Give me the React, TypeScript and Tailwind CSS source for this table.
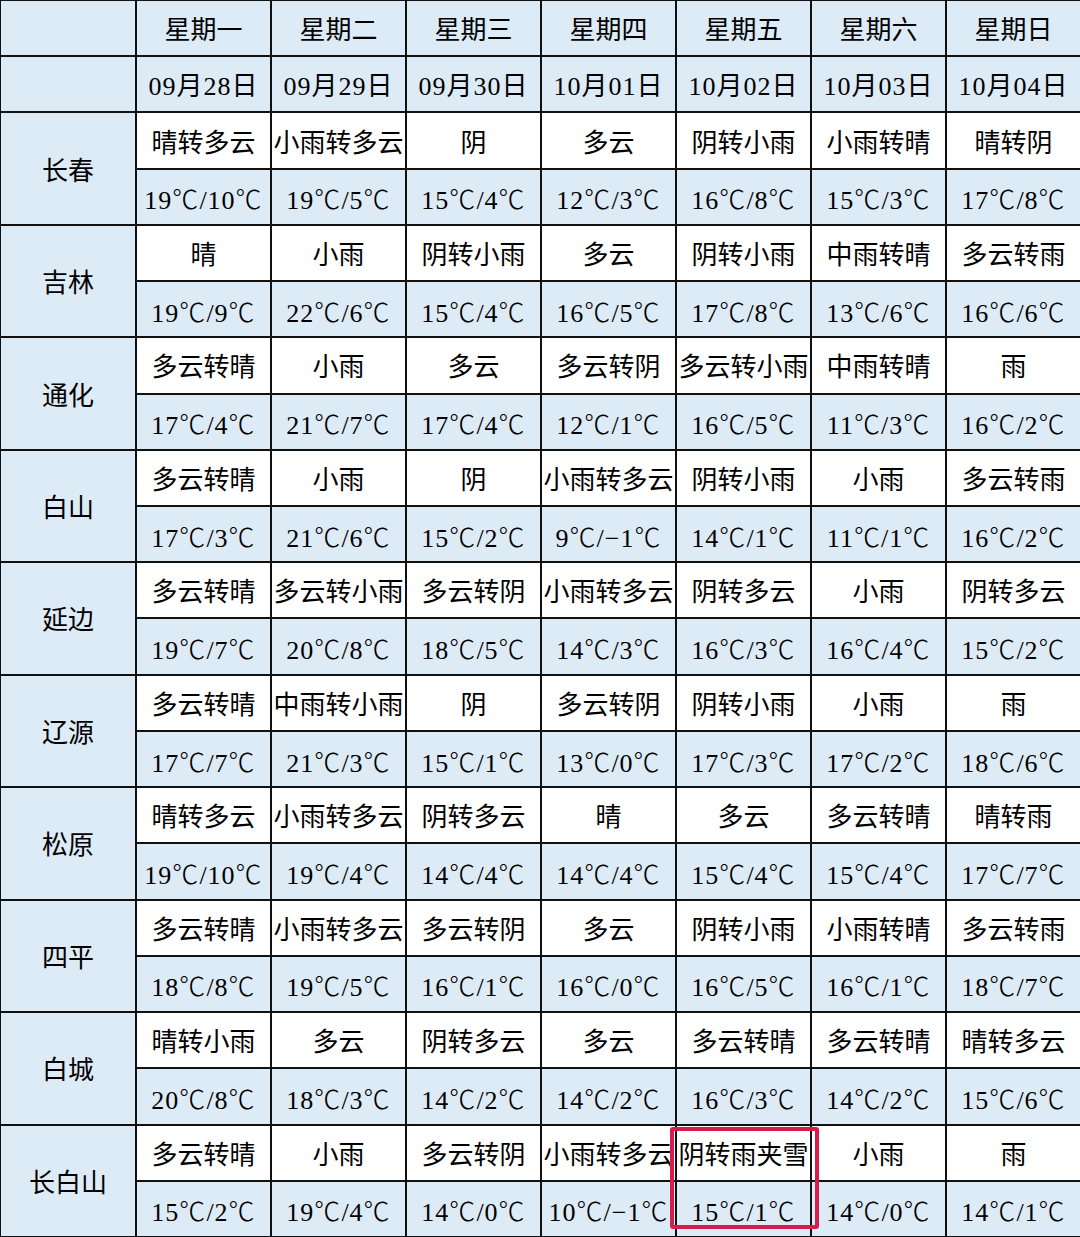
import React from 'react';

const days = ['星期一', '星期二', '星期三', '星期四', '星期五', '星期六', '星期日'];
const dates = ['09月28日', '09月29日', '09月30日', '10月01日', '10月02日', '10月03日', '10月04日'];

const cities = [
  {
    name: '长春',
    weather: ['晴转多云', '小雨转多云', '阴', '多云', '阴转小雨', '小雨转晴', '晴转阴'],
    temp: ['19℃/10℃', '19℃/5℃', '15℃/4℃', '12℃/3℃', '16℃/8℃', '15℃/3℃', '17℃/8℃'],
  },
  {
    name: '吉林',
    weather: ['晴', '小雨', '阴转小雨', '多云', '阴转小雨', '中雨转晴', '多云转雨'],
    temp: ['19℃/9℃', '22℃/6℃', '15℃/4℃', '16℃/5℃', '17℃/8℃', '13℃/6℃', '16℃/6℃'],
  },
  {
    name: '通化',
    weather: ['多云转晴', '小雨', '多云', '多云转阴', '多云转小雨', '中雨转晴', '雨'],
    temp: ['17℃/4℃', '21℃/7℃', '17℃/4℃', '12℃/1℃', '16℃/5℃', '11℃/3℃', '16℃/2℃'],
  },
  {
    name: '白山',
    weather: ['多云转晴', '小雨', '阴', '小雨转多云', '阴转小雨', '小雨', '多云转雨'],
    temp: ['17℃/3℃', '21℃/6℃', '15℃/2℃', '9℃/-1℃', '14℃/1℃', '11℃/1℃', '16℃/2℃'],
  },
  {
    name: '延边',
    weather: ['多云转晴', '多云转小雨', '多云转阴', '小雨转多云', '阴转多云', '小雨', '阴转多云'],
    temp: ['19℃/7℃', '20℃/8℃', '18℃/5℃', '14℃/3℃', '16℃/3℃', '16℃/4℃', '15℃/2℃'],
  },
  {
    name: '辽源',
    weather: ['多云转晴', '中雨转小雨', '阴', '多云转阴', '阴转小雨', '小雨', '雨'],
    temp: ['17℃/7℃', '21℃/3℃', '15℃/1℃', '13℃/0℃', '17℃/3℃', '17℃/2℃', '18℃/6℃'],
  },
  {
    name: '松原',
    weather: ['晴转多云', '小雨转多云', '阴转多云', '晴', '多云', '多云转晴', '晴转雨'],
    temp: ['19℃/10℃', '19℃/4℃', '14℃/4℃', '14℃/4℃', '15℃/4℃', '15℃/4℃', '17℃/7℃'],
  },
  {
    name: '四平',
    weather: ['多云转晴', '小雨转多云', '多云转阴', '多云', '阴转小雨', '小雨转晴', '多云转雨'],
    temp: ['18℃/8℃', '19℃/5℃', '16℃/1℃', '16℃/0℃', '16℃/5℃', '16℃/1℃', '18℃/7℃'],
  },
  {
    name: '白城',
    weather: ['晴转小雨', '多云', '阴转多云', '多云', '多云转晴', '多云转晴', '晴转多云'],
    temp: ['20℃/8℃', '18℃/3℃', '14℃/2℃', '14℃/2℃', '16℃/3℃', '14℃/2℃', '15℃/6℃'],
  },
  {
    name: '长白山',
    weather: ['多云转晴', '小雨', '多云转阴', '小雨转多云', '阴转雨夹雪', '小雨', '雨'],
    temp: ['15℃/2℃', '19℃/4℃', '14℃/0℃', '10℃/-1℃', '15℃/1℃', '14℃/0℃', '14℃/1℃'],
  },
];

const Cell: React.FC<{ blue?: boolean; className?: string; children?: React.ReactNode }> = ({ blue, className = '', children }) => (
  <div
    className={`flex items-center justify-center overflow-hidden whitespace-nowrap pt-[5px] text-[26px] text-black ${
      blue ? 'bg-[#ddebf7]' : 'bg-white'
    } ${className}`}
  >
    {children}
  </div>
);

// split the degree sign out so it renders full width like the source
const Temp: React.FC<{ value: string }> = ({ value }) => (
  <span className="tracking-[1px]">
    {value.split('℃').map((part, i, arr) => (
      <React.Fragment key={i}>
        {part.replace('-', '−')}
        {i < arr.length - 1 && <span className="font-['Noto_Sans_CJK_SC',sans-serif] font-light">℃</span>}
      </React.Fragment>
    ))}
  </span>
);

export default function App() {
  return (
    <div className="relative w-[1080px] h-[1237px] bg-white font-['Liberation_Serif','Noto_Sans_CJK_SC',serif]">
      <div className="grid h-full w-full grid-cols-[134px_repeat(7,133px)] grid-rows-[repeat(22,minmax(0,1fr))] gap-[2px] bg-[#111] pl-[1px] pt-[1px] pb-[1px]">
        <Cell blue />
        {days.map((d) => (
          <Cell key={d} blue>{d}</Cell>
        ))}
        <Cell blue />
        {dates.map((d) => (
          <Cell key={d} blue><span className="tracking-[1px]">{d}</span></Cell>
        ))}
        {cities.map((c) => (
          <React.Fragment key={c.name}>
            <Cell blue className="row-span-2">{c.name}</Cell>
            {c.weather.map((w, i) => (
              <Cell key={'w' + i}>{w}</Cell>
            ))}
            {c.temp.map((t, i) => (
              <Cell key={'t' + i} blue><Temp value={t} /></Cell>
            ))}
          </React.Fragment>
        ))}
      </div>
      {/* highlight box */}
      <div className="absolute left-[670px] top-[1127px] h-[102px] w-[149px] rounded-[3px] border-[4px] border-[#d81b4a]" />
    </div>
  );
}
